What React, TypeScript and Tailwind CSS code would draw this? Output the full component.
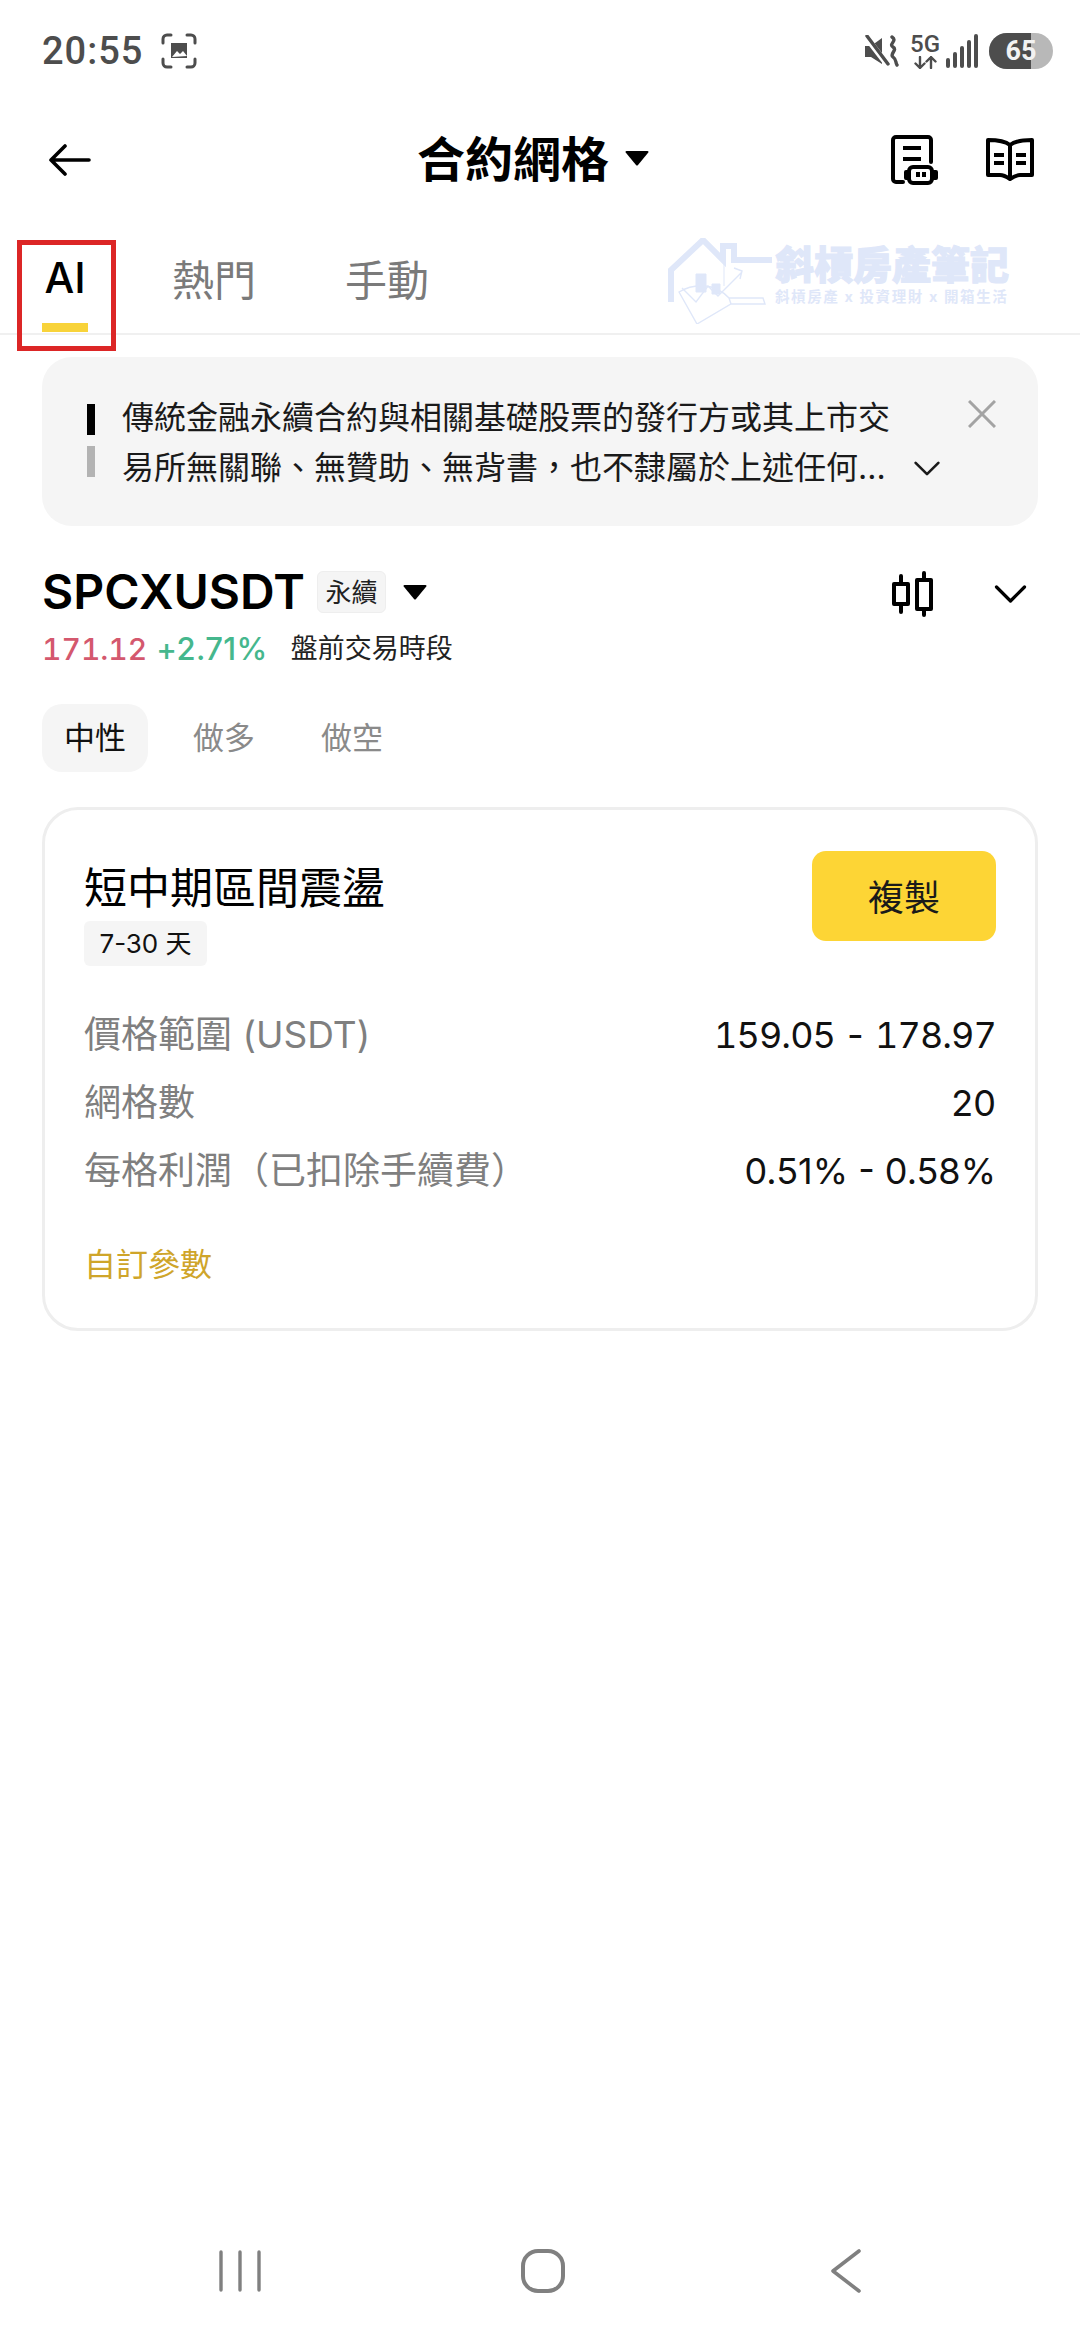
import React from 'react';

const Caret = ({ className }: { className?: string }) => (
  <svg viewBox="0 0 24 16" className={className} fill="currentColor">
    <path d="M1.500 1h21a1 1 0 0 1 .8 1.600L13 15a1.300 1.300 0 0 1-2 0L.7 2.600A1 1 0 0 1 1.500 1z" />
  </svg>
);

const Chevron = ({ className }: { className?: string }) => (
  <svg viewBox="0 0 32 18" className={className} fill="none" stroke="currentColor" strokeWidth="3.2" strokeLinecap="round" strokeLinejoin="round">
    <path d="M2 2l14 14L30 2" />
  </svg>
);

const StatusBar = () => (
  <div className="flex h-[102px] items-center pl-[42px] pr-[27px] text-[#4d4d4d]">
    <span className="text-[38px] font-medium font-['Roboto',sans-serif] tracking-[1px]">20:55</span>
    <svg viewBox="0 0 36 36" className="ml-[18px] h-[36px] w-[36px]" fill="none" stroke="currentColor" strokeWidth="3" strokeLinecap="round">
      <path d="M2 10V6a4 4 0 0 1 4-4h4M26 2h4a4 4 0 0 1 4 4v4M34 26v4a4 4 0 0 1-4 4h-4M10 34H6a4 4 0 0 1-4-4v-4" />
      <path d="M10 10h16v15H10z" fill="currentColor" stroke="none" />
      <path d="M11 24l5-6 3 3 3-3 4 5z" fill="#fff" stroke="none" />
    </svg>
    <div className="ml-auto flex items-center">
      <svg viewBox="0 0 36 32" className="h-[32px] w-[36px]" fill="currentColor">
        <path d="M1 11h6l11-8v26l-11-7H1z" />
        <path d="M2 2l20 26" stroke="#fff" strokeWidth="6" />
        <path d="M3 1l21 28" stroke="currentColor" strokeWidth="3.400" strokeLinecap="round" />
        <path d="M28 2c6 4-4 7 1 10 5 3-4 7 0 10 4 3 2 5 4 8" fill="none" stroke="currentColor" strokeWidth="3.400" strokeLinecap="round" />
      </svg>
      <div className="ml-[10px] flex w-[30px] flex-col items-center">
        <span className="text-[24px] leading-[21px] font-medium font-['Roboto',sans-serif]">5G</span>
        <svg viewBox="0 0 24 13" className="mt-[1px] h-[13px] w-[24px]" fill="none" stroke="currentColor" strokeWidth="2.400" strokeLinecap="round" strokeLinejoin="round">
          <path d="M7 1v11M2.500 7.500L7 12l4.500-4.500M18 12V1M13.500 5.500L18 1l4.500 4.500" />
        </svg>
      </div>
      <svg viewBox="0 0 33 34" className="ml-[6px] h-[34px] w-[33px]" fill="currentColor">
        <rect x="0" y="24" width="4" height="10" rx="2" />
        <rect x="7" y="18" width="4" height="16" rx="2" />
        <rect x="14" y="12" width="4" height="22" rx="2" />
        <rect x="21" y="6" width="4" height="28" rx="2" />
        <rect x="28" y="0" width="4" height="34" rx="2" />
      </svg>
      <div className="relative ml-[10px] flex h-[36px] w-[64px] items-center justify-center overflow-hidden rounded-full bg-[#b8b8b8]">
        <div className="absolute inset-y-0 left-0 w-[42px] bg-[#4d4d4d]" />
        <span className="relative text-[27px] font-bold text-[#f2f2f2] font-['Roboto',sans-serif]">65</span>
      </div>
    </div>
  </div>
);

const Header = () => (
  <div className="flex h-[116px] items-center pl-[49px] pr-[45px] text-black">
    <svg viewBox="0 0 42 32" className="h-[32px] w-[42px]" fill="none" stroke="currentColor" strokeWidth="3.600" strokeLinecap="round" strokeLinejoin="round">
      <path d="M16 2L2 16l14 14M2 16h38" />
    </svg>
    <span className="ml-[326px] text-[48px] leading-none font-bold">合約網格</span>
    <Caret className="ml-[16px] mt-[-4px] h-[16px] w-[24px]" />
    <div className="ml-auto flex items-center">
      <svg viewBox="0 0 48 50" className="h-[50px] w-[48px]" fill="none" stroke="currentColor" strokeWidth="4" strokeLinecap="round" strokeLinejoin="round">
        <path d="M12 47H5a3 3 0 0 1-3-3V5a3 3 0 0 1 3-3h32a3 3 0 0 1 3 3v22" />
        <path d="M12 13h18M12 24h18" strokeLinecap="butt" />
        <rect x="18" y="32" width="23" height="16" rx="4" />
        <path d="M17 37h-2v6h2M42 37h3v6h-3" />
        <path d="M27 37v5M33 37v5" strokeLinecap="butt" />
      </svg>
      <svg viewBox="0 0 50 44" className="ml-[46px] h-[44px] w-[50px]" fill="none" stroke="currentColor" strokeWidth="4" strokeLinejoin="round">
        <path d="M25 7C20 3 12 2 3 2v35h12c4 0 7 2 10 4 3-2 6-4 10-4h12V2c-9 0-17 1-22 5zM25 7v34" />
        <path d="M9 17h10M9 25h10M31 17h10M31 25h10" />
      </svg>
    </div>
  </div>
);

const Watermark = () => (
  <div className="absolute left-[666px] top-[238px] flex text-[#dfe7f9]">
    <svg viewBox="0 0 106 86" className="h-[86px] w-[106px]" fill="none" stroke="currentColor">
      <path d="M5 64V32L37 2l20 20V8h11v14h38" strokeWidth="6" />
      <path d="M58 24v24M30 36h10v18H30zM46 46h8v10h-8z" fill="currentColor" strokeWidth="1" />
      <path d="M16 50l14 14 12-16 10 10 24-24M68 30l8 3-2 8" strokeWidth="1.400" />
      <path d="M13 54l18 32 34-20 34 0-2-6-34 0C50 46 30 44 13 54zM63 60l2 6" strokeWidth="1.400" />
    </svg>
    <div className="ml-[3px] flex flex-col items-start">
      <span className="mt-[4px] text-[39px] leading-[46px] font-black [-webkit-text-stroke:1px_#dfe7f9]">斜槓房產筆記</span>
      <span className="text-[14.500px] leading-[18px] font-bold tracking-[1.600px] whitespace-nowrap">斜槓房產 x 投資理財 x 開箱生活</span>
    </div>
  </div>
);

const Tabs = () => (
  <div className="flex h-[117px] items-start border-b-2 border-[#f0f0f0] pl-[42px]">
    <div className="flex w-[46px] flex-col items-center pt-[35px]">
      <span className="text-[42px] leading-[50px] font-[450] text-black">AI</span>
      <div className="mt-[20px] h-[9px] w-[46px] bg-[#f8d33a]" />
    </div>
    <span className="ml-[84px] mt-[38px] text-[42px] leading-[50px] text-[#7a7a7a]">熱門</span>
    <span className="ml-[89px] mt-[38px] text-[42px] leading-[50px] text-[#7a7a7a]">手動</span>
  </div>
);

const Banner = () => (
  <div className="mx-[42px] mt-[22px] flex h-[169px] rounded-[30px] bg-[#f5f5f5] pl-[45px] pr-[42px] pt-[36px]">
    <div className="flex w-[8px] flex-col gap-[11px] pt-[11px]">
      <div className="h-[31px] bg-black" />
      <div className="h-[31px] bg-[#b3b3b3]" />
    </div>
    <div className="ml-[27px] text-[32px] leading-[50px] text-[#1a1a1a]">
      <p className="whitespace-nowrap">傳統金融永續合約與相關基礎股票的發行方或其上市交</p>
      <div className="flex items-center">
        <p className="whitespace-nowrap">{'易所無關聯、無贊助、無背書\uFF0C也不隸屬於上述任何...'}</p>
        <Chevron className="ml-[28px] h-[15px] w-[26px]" />
      </div>
    </div>
    <svg viewBox="0 0 28 28" className="ml-auto mt-[7px] h-[28px] w-[28px]" fill="none" stroke="#a3a3a3" strokeWidth="3">
      <path d="M1 1l26 26M27 1L1 27" />
    </svg>
  </div>
);

const SymbolRow = () => (
  <div className="mt-[45px] flex items-start px-[42px]">
    <div>
      <div className="flex h-[42px] items-center">
        <span className="text-[48px] leading-none font-semibold text-black">SPCXUSDT</span>
        <span className="ml-[12px] flex h-[42px] w-[69px] items-center justify-center rounded-[6px] border border-[#eeeeee] bg-[#f5f5f5] text-[26px] text-[#222222]">永續</span>
        <Caret className="ml-[17px] h-[16px] w-[24px]" />
      </div>
      <div className="mt-[15px] flex h-[42px] items-center">
        <span className="text-[30px] font-medium tabular-nums text-[#d4586e]">171.12</span>
        <span className="ml-[9px] text-[31px] font-medium tracking-[0.400px] text-[#45b78d]">+2.71%</span>
        <span className="ml-[23px] text-[27px] text-[#222222]">盤前交易時段</span>
      </div>
    </div>
    <div className="ml-auto flex items-center pr-[11px]">
      <svg viewBox="0 0 41 46" className="h-[46px] w-[41px]" fill="none" stroke="black" strokeWidth="4" strokeLinecap="round" strokeLinejoin="round">
        <rect x="2" y="13" width="14" height="20" />
        <rect x="25" y="9" width="14" height="29" />
        <path d="M9 5v8M9 33v8M32 2v7M32 38v6" />
      </svg>
      <Chevron className="ml-[61px] h-[18px] w-[33px]" />
    </div>
  </div>
);

const DirectionTabs = () => (
  <div className="mt-[34px] flex items-center pl-[42px] text-[31px] text-[#8a8a8a]">
    <span className="flex h-[68px] w-[106px] items-center justify-center rounded-[20px] bg-[#f5f5f5] text-[#111111]">中性</span>
    <span className="ml-[45px]">做多</span>
    <span className="ml-[66px]">做空</span>
  </div>
);

const rows = [
  { label: '價格範圍 (USDT)', value: '159.05 - 178.97', numeric: 'tabular-nums tracking-[-0.900px]' },
  { label: '網格數', value: '20', numeric: '' },
  { label: '每格利潤\uFF08已扣除手續費\uFF09', value: '0.51% - 0.58%', numeric: '' },
];

const StrategyCard = () => (
  <div className="mx-[42px] mt-[35px] h-[524px] rounded-[36px] border-[3px] border-[#eeeeee] px-[39px] pt-[41px]">
    <div className="flex items-start justify-between">
      <div className="pt-[11px]">
        <p className="text-[43px] leading-[52px] text-black">短中期區間震盪</p>
        <span className="mt-[7px] flex h-[45px] w-[123px] items-center justify-center rounded-[6px] bg-[#f5f5f5] text-[26px] text-[#111111]">7-30 天</span>
      </div>
      <button className="h-[90px] w-[184px] rounded-[14px] bg-[#fdd535] pt-[3px] text-[36px] text-[#1a1a1a]">複製</button>
    </div>
    <div className="mt-[35px] flex flex-col">
      {rows.map((row) => (
        <div key={row.label} className="flex h-[68px] items-center justify-between">
          <span className="text-[37px] text-[#7f7f7f]">{row.label}</span>
          <span className={`text-[36px] text-[#111111] ${row.numeric}`}>{row.value}</span>
        </div>
      ))}
    </div>
    <p className="mt-[38px] text-[32px] leading-[44px] text-[#cfa52a]">自訂參數</p>
  </div>
);

const NavBar = () => (
  <div className="mt-auto flex h-[138px] items-center pl-[219px] text-[#808080]">
    <svg viewBox="0 0 42 42" className="h-[42px] w-[42px]" fill="none" stroke="currentColor" strokeWidth="3.400" strokeLinecap="round">
      <path d="M2 2v38M21 2v38M40 2v38" />
    </svg>
    <svg viewBox="0 0 44 44" className="ml-[260px] h-[44px] w-[44px]" fill="none" stroke="currentColor" strokeWidth="4">
      <rect x="2" y="2" width="40" height="40" rx="15" />
    </svg>
    <svg viewBox="0 0 32 44" className="ml-[265px] h-[44px] w-[32px]" fill="none" stroke="currentColor" strokeWidth="3.600" strokeLinecap="round" strokeLinejoin="round">
      <path d="M29 2L3 22l26 20" />
    </svg>
  </div>
);

export default function App() {
  return (
    <div className="relative flex h-[2340px] w-[1080px] flex-col overflow-hidden bg-white font-['Inter','Noto_Sans_CJK_TC',sans-serif]">
      <StatusBar />
      <Header />
      <Tabs />
      <Banner />
      <SymbolRow />
      <DirectionTabs />
      <StrategyCard />
      <NavBar />
      <Watermark />
      {/* red annotation box around the AI tab */}
      <div className="absolute left-[17px] top-[240px] h-[111px] w-[99px] border-[5px] border-[#dc2626]" />
    </div>
  );
}
